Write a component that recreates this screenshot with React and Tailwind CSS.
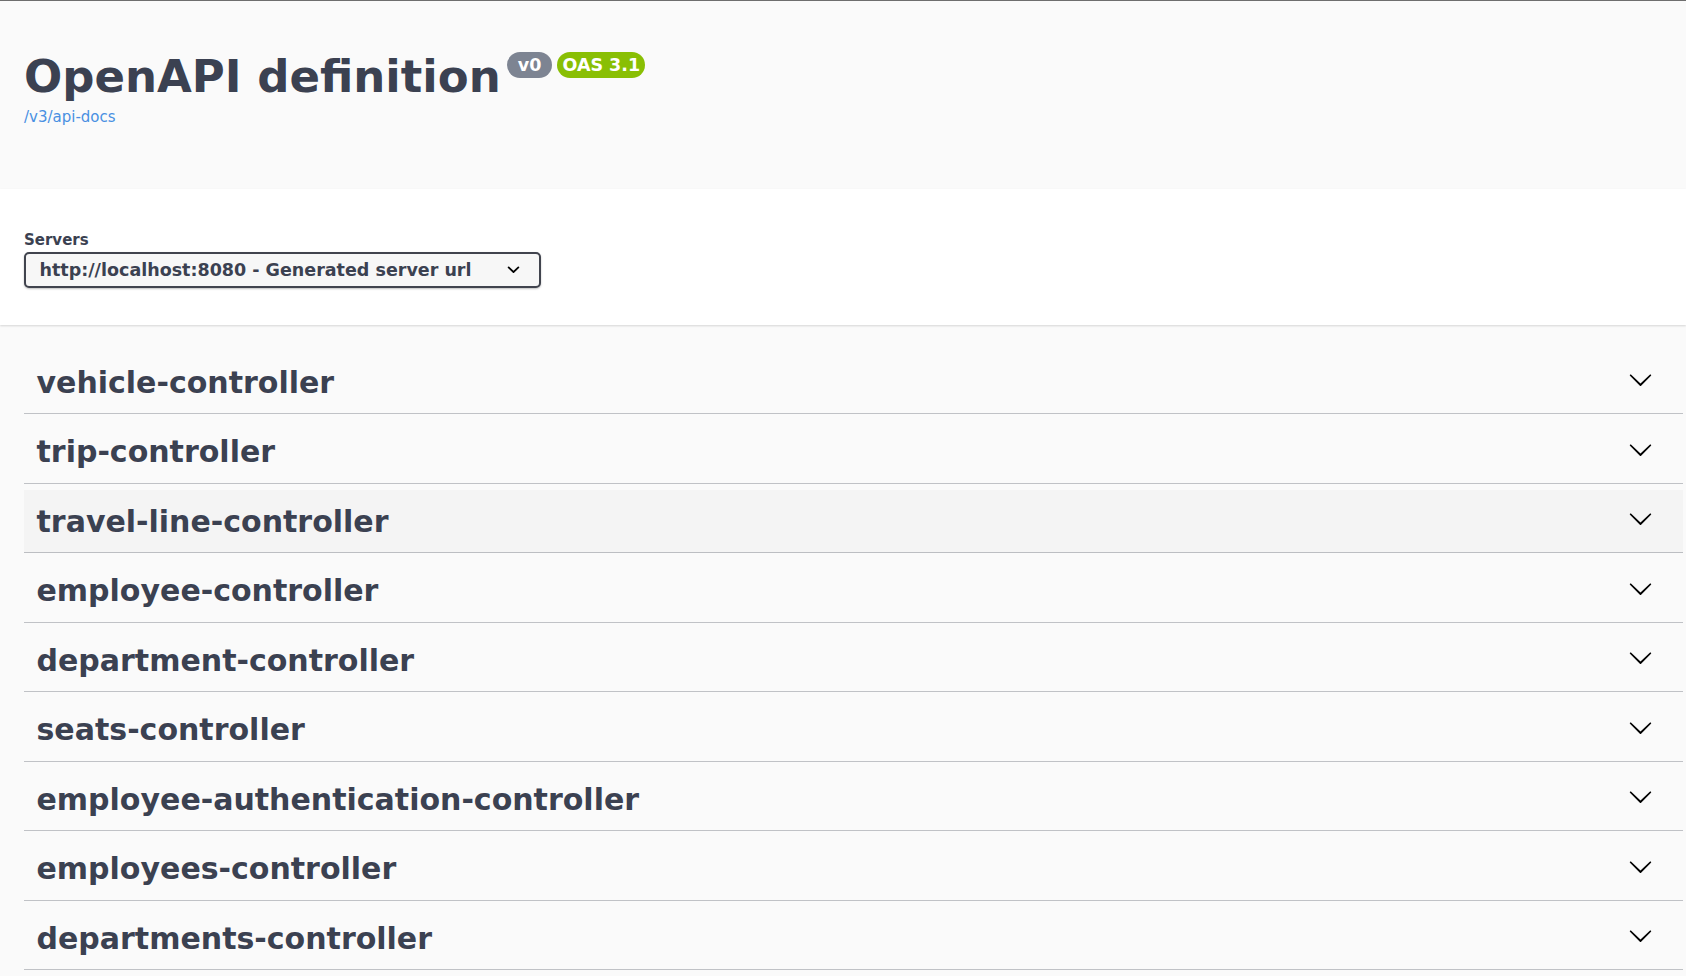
const tags = [
  "vehicle-controller",
  "trip-controller",
  "travel-line-controller",
  "employee-controller",
  "department-controller",
  "seats-controller",
  "employee-authentication-controller",
  "employees-controller",
  "departments-controller",
];

const ArrowDown = ({ className }) => (
  <svg viewBox="0 0 20 20" className={className} fill="currentColor">
    <path d="M17.418 6.109c.272-.268.709-.268.979 0s.271.701 0 .969l-7.908 7.83c-.27.268-.707.268-.979 0l-7.908-7.83c-.27-.268-.27-.701 0-.969.271-.268.709-.268.979 0L10 13.25l7.418-7.141z" />
  </svg>
);

const SelectArrow = ({ className }) => (
  <svg viewBox="0 0 20 20" className={className} fill="currentColor">
    <path d="M13.418 7.859a.695.695 0 01.978 0 .68.68 0 010 .969l-3.908 3.83a.697.697 0 01-.979 0l-3.908-3.83a.68.68 0 010-.969.695.695 0 01.978 0L10 11l3.418-3.141z" />
  </svg>
);

const App = () => {
  return (
    <div className="min-h-screen bg-[#fafafa] border-t border-[#6e6e6e] font-['DejaVu_Sans',sans-serif] text-[#3b4151]">
      {/* ---------------- Info ---------------- */}

      <div className="h-[188px] pl-[24px] pt-[50px]">
        <div className="flex items-start">
          <h2 className="text-[45px] font-bold leading-[52px]">
            OpenAPI definition
          </h2>

          <div className="flex mt-[1px] ml-[6px] gap-[5px]">
            <span className="bg-[#7d8492] text-white rounded-full px-[5px] py-[3px] text-[17.5px] font-bold leading-[20px] whitespace-pre">
              {" v0 "}
            </span>
            <span className="bg-[#89bf04] text-white rounded-full px-[5px] py-[3px] text-[17.5px] font-bold leading-[20px] whitespace-pre">
              OAS 3.1
            </span>
          </div>
        </div>

        <a className="block mt-[6px] text-[15px] leading-[17.5px] text-[#4990e2] w-fit">
          /v3/api-docs
        </a>
      </div>

      {/* ---------------- Servers ---------------- */}

      <div className="relative z-10 h-[136px] bg-white pl-[24px] pt-[43px] shadow-[0_1px_2px_0_rgba(0,0,0,0.15)]">
        <p className="text-[15px] font-bold leading-[17.5px]">Servers</p>

        <div className="mt-[2px] flex items-center justify-between w-[517px] h-[36px] border-2 border-[#41444e] rounded-[5px] bg-[#f7f7f7] pl-[13.5px] pr-[13px] shadow-[0_1px_2px_0_rgba(0,0,0,0.25)]">
          <span className="text-[17.5px] font-bold leading-[20px]">
            http://localhost:8080 - Generated server url
          </span>
          <SelectArrow className="w-[25px] h-[25px] text-black" />
        </div>
      </div>

      {/* ---------------- Tags ---------------- */}

      <div className="pt-[26px] pl-[24px] pr-[3px]">
        {tags.map((tag) => (
          <div
            key={tag}
            className={`flex items-center justify-between h-[63px] mb-[6.5px] border-b border-[rgba(59,65,81,0.3)] pl-[12.5px] pr-[30px] ${
              tag === "travel-line-controller" ? "bg-[#f4f4f4]" : ""
            }`}
          >
            <h3 className="text-[30px] font-bold leading-[35px]">{tag}</h3>

            <ArrowDown className="w-[25px] h-[25px] mb-[5px] text-black" />
          </div>
        ))}
      </div>
    </div>
  );
};

export default App;
